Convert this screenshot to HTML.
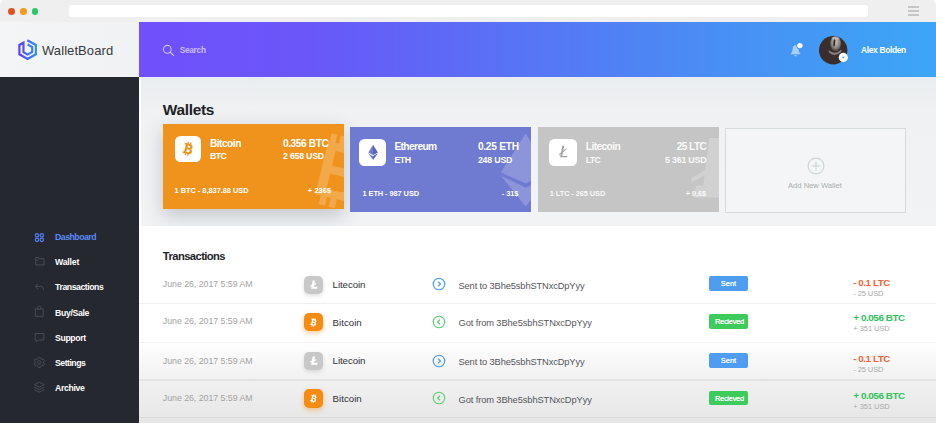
<!DOCTYPE html>
<html><head><meta charset="utf-8"><title>WalletBoard</title>
<style>
*{box-sizing:border-box;margin:0;padding:0}
html,body{width:936px;height:423px;overflow:hidden;background:#fff;font-family:"Liberation Sans",sans-serif}
.a{position:absolute}
.t{position:absolute;line-height:1;white-space:nowrap}
svg{overflow:visible}
</style></head><body>
<div class="a" style="left:0;top:0;width:936px;height:22px;background:#efefef;border-radius:5px 5px 0 0"></div>
<div class="a" style="left:8.2px;top:7.8px;width:6.8px;height:6.8px;border-radius:50%;background:#e0531d"></div>
<div class="a" style="left:19.9px;top:7.8px;width:6.8px;height:6.8px;border-radius:50%;background:#f59a1c"></div>
<div class="a" style="left:31.5px;top:7.8px;width:6.8px;height:6.8px;border-radius:50%;background:#2dc76a"></div>
<div class="a" style="left:69.2px;top:4.7px;width:798.8px;height:12.8px;background:#fff;border-radius:3px"></div>
<div class="a" style="left:908px;top:5.9px;width:10.8px;height:1.7px;background:#c6c6c6"></div>
<div class="a" style="left:908px;top:10px;width:10.8px;height:1.7px;background:#c6c6c6"></div>
<div class="a" style="left:908px;top:14.1px;width:10.8px;height:1.7px;background:#c6c6c6"></div>
<div class="a" style="left:0;top:22px;width:139px;height:55px;background:linear-gradient(90deg,#f4f5f6,#f0f2f4)"></div>
<div class="a" style="left:0;top:77px;width:139px;height:346px;background:#25282e"></div>
<div class="a" style="left:139px;top:22px;width:797px;height:54.5px;background:linear-gradient(90deg,#7050fb 0%,#6a56f9 20%,#5c6cf6 41%,#4a8cf4 70%,#3ca6f6 100%)"></div>
<div class="a" style="left:139px;top:76.5px;width:797px;height:149px;background:linear-gradient(180deg,#eaedef 0%,#eff1f3 22%,#f1f3f5 100%)"></div>
<div class="a" style="left:139px;top:76.5px;width:2.2px;height:149px;background:#fbfcfc"></div>
<svg class="a" style="left:17px;top:37.5px" width="22" height="23" viewBox="0 0 22 23">
<defs><linearGradient id="lg" gradientUnits="userSpaceOnUse" x1="2" x2="19" y1="0" y2="0"><stop offset="0" stop-color="#5b3df6"/><stop offset="1" stop-color="#2f8ff7"/></linearGradient></defs>
<path d="M10.6 6.4 L15.2 9.1 V13.9 L10.6 16.6 L6.5 14.1 V4.7 L2.4 7.0 V16.3 L10.6 20.9 L18.9 16.3 V7.0 L10.3 2.2" fill="none" stroke="url(#lg)" stroke-width="2.15" stroke-linejoin="miter"/></svg>
<div class="t" style="left:42.00px;top:44.25px;font-size:13px;color:#383a41;letter-spacing:0.079px;">WalletBoard</div>
<svg class="a" style="left:162px;top:44px" width="13" height="13" viewBox="0 0 13 13"><circle cx="5.3" cy="5.3" r="3.9" fill="none" stroke="#cbc1fd" stroke-width="1.1"/><path d="M8.2 8.2 L11.6 11.4" stroke="#cbc1fd" stroke-width="1.2" stroke-linecap="round"/></svg>
<div class="t" style="left:179.70px;top:46.10px;font-size:8.3px;color:#c9bdfc;font-weight:bold;letter-spacing:-0.281px;">Search</div>
<svg class="a" style="left:789px;top:42px" width="14" height="15" viewBox="0 0 14 15"><path d="M6.6 2.2 C4.3 2.2 3.6 4.3 3.6 6.2 C3.6 8.6 2.6 9.6 1.9 10.4 V11.2 H11.3 V10.4 C10.6 9.6 9.6 8.6 9.6 6.2 C9.6 4.3 8.9 2.2 6.6 2.2 Z M5.4 12 H7.8 C7.8 12.9 7.3 13.4 6.6 13.4 C5.9 13.4 5.4 12.9 5.4 12 Z" fill="#a9cffb" transform="translate(0 1.1)"/><circle cx="10.9" cy="3.6" r="3.6" fill="#4594f4"/><circle cx="10.9" cy="3.6" r="2.7" fill="#fff"/></svg>
<svg class="a" style="left:819px;top:35.5px" width="30" height="30" viewBox="0 0 30 30">
<defs><clipPath id="av"><circle cx="14.2" cy="14.2" r="14.2"/></clipPath><radialGradient id="fg" cx="0.5" cy="0.4" r="0.6"><stop offset="0" stop-color="#c4c1c0"/><stop offset="0.6" stop-color="#8f8a88"/><stop offset="1" stop-color="#4a403e"/></radialGradient></defs>
<g clip-path="url(#av)"><rect width="30" height="30" fill="#3a2e2c"/><ellipse cx="16.6" cy="7.6" rx="5.4" ry="7.6" fill="url(#fg)"/><ellipse cx="15.3" cy="6.8" rx="0.9" ry="3.6" fill="#2a2220" transform="rotate(6 15.3 6.8)"/><path d="M12.5 1.5 Q16 0.4 20 2 L19 4 Q16 2.6 13.5 3.6 Z" fill="#d8d6d5" opacity=".55"/><path d="M9.6 14 Q16 19.5 22.4 13.6 L22.2 16 Q16 21.6 10 16.4 Z" fill="#8d8684" opacity=".9"/></g>
<circle cx="24.3" cy="21.4" r="4.6" fill="#fff"/><path d="M22.8 20.8 H25.8 L24.3 22.5 Z" fill="#3f9af5"/></svg>
<div class="t" style="left:861.00px;top:46.05px;font-size:8.4px;color:#ffffff;font-weight:bold;letter-spacing:-0.322px;">Alex Bolden</div>
<div class="t" style="left:55.10px;top:232.90px;font-size:8.7px;color:#5b8cf6;font-weight:bold;letter-spacing:-0.494px;">Dashboard</div>
<div class="t" style="left:55.10px;top:257.90px;font-size:8.7px;color:#fff;font-weight:bold;letter-spacing:-0.216px;">Wallet</div>
<div class="t" style="left:55.10px;top:282.90px;font-size:8.7px;color:#fff;font-weight:bold;letter-spacing:-0.448px;">Transactions</div>
<div class="t" style="left:55.10px;top:308.90px;font-size:8.7px;color:#fff;font-weight:bold;letter-spacing:-0.344px;">Buy/Sale</div>
<div class="t" style="left:55.10px;top:333.90px;font-size:8.7px;color:#fff;font-weight:bold;letter-spacing:-0.378px;">Support</div>
<div class="t" style="left:55.10px;top:358.90px;font-size:8.7px;color:#fff;font-weight:bold;letter-spacing:-0.515px;">Settings</div>
<div class="t" style="left:55.10px;top:383.90px;font-size:8.7px;color:#fff;font-weight:bold;letter-spacing:-0.374px;">Archive</div>
<svg class="a" style="left:33px;top:232px" width="13" height="12" viewBox="0 0 13 12"><g fill="none" stroke="#4f7ff5" stroke-width="1.25"><circle cx="3.95" cy="3.3" r="1.7"/><circle cx="8.8" cy="3.3" r="1.7"/><circle cx="3.95" cy="7.85" r="1.7"/><circle cx="8.8" cy="7.85" r="1.7"/></g></svg>
<svg class="a" style="left:33px;top:255.3px" width="13" height="12" viewBox="0 0 13 12"><path d="M2.7 2.5 H5.6 L6.5 3.7 H11 V10 H2.7 Z M2.7 5.2 H5 L5.8 4.3" fill="none" stroke="#474b55" stroke-width="1"/></svg>
<svg class="a" style="left:33px;top:281px" width="13" height="12" viewBox="0 0 13 12"><path d="M5 2.8 L2.3 5.4 L5 8 M2.5 5.4 H7.5 C9.6 5.4 10.6 6.8 10.6 9" fill="none" stroke="#474b55" stroke-width="1"/></svg>
<svg class="a" style="left:33px;top:305px" width="13" height="13" viewBox="0 0 13 13"><path d="M2.3 4 H10.2 V11.3 H2.3 Z M4.4 4 V3 C4.4 1.8 5.2 1.2 6.25 1.2 C7.3 1.2 8.1 1.8 8.1 3 V4" fill="none" stroke="#474b55" stroke-width="1"/></svg>
<svg class="a" style="left:33px;top:331px" width="13" height="13" viewBox="0 0 13 13"><path d="M2.2 2.5 H10.8 V9 H5.2 L3.2 11 V9 H2.2 Z" fill="none" stroke="#474b55" stroke-width="1"/></svg>
<svg class="a" style="left:33px;top:356px" width="13" height="13" viewBox="0 0 13 13"><circle cx="6.3" cy="6.4" r="1.7" fill="none" stroke="#474b55" stroke-width="1"/><path d="M5.3 1.3 H7.3 L7.7 2.7 L9 3.4 L10.4 3 L11.4 4.7 L10.4 5.8 V7 L11.4 8.1 L10.4 9.8 L9 9.4 L7.7 10.1 L7.3 11.5 H5.3 L4.9 10.1 L3.6 9.4 L2.2 9.8 L1.2 8.1 L2.2 7 V5.8 L1.2 4.7 L2.2 3 L3.6 3.4 L4.9 2.7 Z" fill="none" stroke="#474b55" stroke-width="1"/></svg>
<svg class="a" style="left:33px;top:381px" width="13" height="13" viewBox="0 0 13 13"><path d="M6.3 1.2 L11.3 3.7 L6.3 6.2 L1.3 3.7 Z M1.3 6.2 L6.3 8.7 L11.3 6.2 M1.3 8.7 L6.3 11.2 L11.3 8.7" fill="none" stroke="#474b55" stroke-width="1" stroke-linejoin="round"/></svg>
<div class="t" style="left:162.80px;top:102.05px;font-size:15.4px;color:#212226;font-weight:bold;letter-spacing:-0.306px;">Wallets</div>
<div class="a" style="left:162.5px;top:124px;width:181.5px;height:85.4px;background:#f0931c;box-shadow:0 7px 18px 0 rgba(50,60,70,.24);overflow:hidden">
<svg class="a" style="left:0;top:0" width="182" height="86" viewBox="162.5 124 182 86"><g transform="translate(327.7 141.1) rotate(13.5)" fill="rgba(255,255,255,.2)"><path fill-rule="evenodd" d="M0 0 H24 C34 0 38 6 38 13.5 C38 20 35 24.5 30 26.5 C37 28.5 41 33.5 41 40 C41 49 35 54.7 25 54.7 H0 Z M9.5 8 V23 H21 C26 23 28.5 20 28.5 15.5 C28.5 11 26 8 21 8 Z M9.5 31 V46.7 H22 C28 46.7 31 43.5 31 38.8 C31 34 28 31 22 31 Z"/><rect x="1.5" y="-8.5" width="6" height="8.5"/><rect x="11" y="-8.5" width="6" height="8.5"/><rect x="5.5" y="54.7" width="6.5" height="9"/><rect x="15.5" y="54.7" width="6.5" height="9"/></g></svg>
</div>
<div class="a" style="left:174.6px;top:136.2px;width:26.5px;height:26px;background:#fff;border-radius:5.5px"></div>
<svg class="a" style="left:0;top:0" width="936" height="423" viewBox="0 0 936 423"><path transform="translate(188.1 148.85) rotate(14) scale(0.9) translate(-5 -7.5)" fill="#f0931c" fill-rule="evenodd" d="M0 1.8 H5.6 C8.2 1.8 9.4 3 9.4 4.8 C9.4 6 8.8 6.8 7.8 7.2 C9.2 7.6 10 8.6 10 10 C10 12 8.6 13.2 6 13.2 H0 V11.4 H1.4 V3.6 H0 Z M3.9 3.8 V6.3 H5.3 C6.3 6.3 6.9 5.85 6.9 5.05 C6.9 4.25 6.3 3.8 5.3 3.8 Z M3.9 8.2 V11.2 H5.7 C6.8 11.2 7.4 10.6 7.4 9.7 C7.4 8.8 6.8 8.2 5.7 8.2 Z M2.9 0 H4.4 V1.9 H2.9 Z M5.6 0 H7.1 V1.9 H5.6 Z M2.9 13.1 H4.4 V15 H2.9 Z M5.6 13.1 H7.1 V15 H5.6 Z"/></svg>
<div class="t" style="left:209.90px;top:138.65px;font-size:10.2px;color:#ffffff;font-weight:bold;letter-spacing:-0.509px;">Bitcoin</div>
<div class="t" style="left:209.90px;top:151.85px;font-size:8.8px;color:#ffffff;font-weight:bold;letter-spacing:-0.595px;">BTC</div>
<div class="t" style="left:283.00px;top:138.65px;font-size:10.2px;color:#ffffff;font-weight:bold;letter-spacing:-0.436px;">0.356 BTC</div>
<div class="t" style="left:283.00px;top:151.85px;font-size:8.8px;color:#ffffff;font-weight:bold;letter-spacing:-0.227px;">2 658 USD</div>
<div class="t" style="left:174.60px;top:187.05px;font-size:7.4px;color:#ffffff;font-weight:bold;letter-spacing:-0.022px;">1 BTC - 8,837.88 USD</div>
<div class="t" style="left:307.80px;top:187.05px;font-size:7.4px;color:#ffffff;font-weight:bold;letter-spacing:0.110px;">+ 236$</div>
<div class="a" style="left:350px;top:127.3px;width:181px;height:85.2px;background:#6f7bd0;overflow:hidden">
<svg class="a" style="left:145px;top:0" width="36" height="86" viewBox="0 0 36 86"><g fill="#8c95da"><path d="M30.7 6.6 L5.9 45.6 L30.7 56.2 L55.5 45.6 Z"/><path d="M6 48.7 L30.7 60.7 L55.5 48.7 L30.7 79.6 Z"/></g></svg>
</div>
<div class="a" style="left:359.3px;top:138.8px;width:26.6px;height:27px;background:#fff;border-radius:5.5px"></div>
<svg class="a" style="left:365.5px;top:143.8px" width="14" height="17" viewBox="0 0 14 17"><path d="M7 1 L2.3 8.4 L7 11 L11.7 8.4 Z" fill="#6f7bd0"/><path d="M2.3 9.5 L7 12.2 L11.7 9.5 L7 15.8 Z" fill="#6f7bd0"/><path d="M7 1 L7 11 L11.7 8.4 Z M7 12.2 L11.7 9.5 L7 15.8 Z" fill="#5a66c0"/></svg>
<div class="t" style="left:394.40px;top:141.65px;font-size:10.2px;color:#ffffff;font-weight:bold;letter-spacing:-0.606px;">Ethereum</div>
<div class="t" style="left:394.40px;top:155.85px;font-size:8.8px;color:#ffffff;font-weight:bold;letter-spacing:-0.400px;">ETH</div>
<div class="t" style="left:477.90px;top:141.65px;font-size:10.2px;color:#ffffff;font-weight:bold;letter-spacing:-0.261px;">0.25 ETH</div>
<div class="t" style="left:477.90px;top:155.85px;font-size:8.8px;color:#ffffff;font-weight:bold;letter-spacing:-0.187px;">248 USD</div>
<div class="t" style="left:362.50px;top:190.05px;font-size:7.4px;color:#ffffff;font-weight:bold;letter-spacing:-0.065px;">1 ETH - 987 USD</div>
<div class="t" style="left:501.70px;top:190.05px;font-size:7.4px;color:#ffffff;font-weight:bold;letter-spacing:-0.033px;">- 31$</div>
<div class="a" style="left:537.5px;top:127.3px;width:181.5px;height:85.2px;background:#c5c5c5;overflow:hidden">
<svg class="a" style="left:140px;top:0" width="42" height="86" viewBox="0 0 42 86"><g fill="#d1d1d1"><path d="M31.1 11.1 H42 V59 H25.3 Z"/><path d="M18.3 58.5 H42 V70.6 H15 Z"/><path d="M13.6 51 L29 42 L28 47.5 L13 56 Z"/></g></svg>
</div>
<div class="a" style="left:549.4px;top:138.7px;width:27.2px;height:27.2px;background:#fff;border-radius:5.5px"></div>
<svg class="a" style="left:0;top:0" width="936" height="423" viewBox="0 0 936 423"><g fill="#a2a2a2"><path d="M562.4 145.8 H564.3 L562.3 155.9 H567.5 L567.2 157.3 H560.1 Z"/><path d="M559.2 153.9 L566.7 148.1 L566.4 149.6 L558.9 155.4 Z"/></g></svg>
<div class="t" style="left:585.80px;top:141.65px;font-size:10.2px;color:#f9f9f9;font-weight:bold;letter-spacing:-0.600px;">Litecoin</div>
<div class="t" style="left:585.80px;top:155.85px;font-size:8.8px;color:#f9f9f9;font-weight:bold;letter-spacing:-0.751px;">LTC</div>
<div class="t" style="left:676.70px;top:141.65px;font-size:10.2px;color:#f9f9f9;font-weight:bold;letter-spacing:-0.592px;">25 LTC</div>
<div class="t" style="left:665.00px;top:155.85px;font-size:8.8px;color:#f9f9f9;font-weight:bold;letter-spacing:-0.183px;">5 361 USD</div>
<div class="t" style="left:549.80px;top:190.05px;font-size:7.4px;color:#f9f9f9;font-weight:bold;letter-spacing:-0.074px;">1 LTC - 265 USD</div>
<div class="t" style="left:685.70px;top:190.05px;font-size:7.4px;color:#f9f9f9;font-weight:bold;letter-spacing:-0.080px;">+ 0,6$</div>
<div class="a" style="left:725px;top:127.5px;width:180.6px;height:85px;border:1px solid #d3dbdc;background:#f3f5f6"></div>
<svg class="a" style="left:806px;top:155.6px" width="20" height="20" viewBox="0 0 20 20"><circle cx="10" cy="10" r="7.9" fill="none" stroke="#cad4d5" stroke-width="1.1"/><path d="M10 5.8 V14.2 M5.8 10 H14.2" stroke="#cad4d5" stroke-width="1.1"/></svg>
<div class="t" style="left:788.00px;top:181.95px;font-size:7.6px;color:#a9adad;letter-spacing:0.001px;">Add New Wallet</div>
<div class="a" style="left:139px;top:225.5px;width:797px;height:197.5px;background:linear-gradient(180deg,#fff 0%,#fff 58%,#f1f1f1 78%,#e6e6e6 100%)"></div>
<div class="t" style="left:162.80px;top:250.65px;font-size:11.2px;color:#222327;font-weight:bold;letter-spacing:-0.566px;">Transactions</div>
<div class="a" style="left:139px;top:303.0px;width:797px;height:1.2px;background:rgba(0,0,0,.055)"></div>
<div class="a" style="left:139px;top:341.7px;width:797px;height:1.2px;background:rgba(0,0,0,.055)"></div>
<div class="a" style="left:139px;top:379.4px;width:797px;height:1.2px;background:rgba(0,0,0,.055)"></div>
<div class="a" style="left:139px;top:417.1px;width:797px;height:1.2px;background:rgba(0,0,0,.055)"></div>
<div class="t" style="left:162.80px;top:279.85px;font-size:8.8px;color:#a3a3a3;letter-spacing:-0.034px;">June 26, 2017 5:59 AM</div>
<div class="a" style="left:304.4px;top:275.8px;width:18.2px;height:18.2px;border-radius:5px;background:#c8c8c8;box-shadow:0 2px 4px rgba(0,0,0,.12)"></div>
<svg class="a" style="left:308.5px;top:279.9px" width="10" height="10" viewBox="0 0 10 10"><g fill="#fff"><path d="M3.7 0.6 H6 L4.9 6.7 H8.6 L8.2 8.8 H2.1 Z"/><path d="M1.4 5.3 L7.2 2.9 L6.9 4.4 L1.1 6.8 Z"/></g></svg>
<div class="t" style="left:332.60px;top:279.90px;font-size:9.7px;color:#303136;letter-spacing:-0.079px;">Litecoin</div>
<svg class="a" style="left:431.5px;top:277.1px" width="14" height="14" viewBox="0 0 14 14"><circle cx="7" cy="7" r="5.75" fill="none" stroke="#4a9cf5" stroke-width="1.2"/><path d="M6.1 4.7 L8.4 7 L6.1 9.3" fill="none" stroke="#4a9cf5" stroke-width="1.25"/></svg>
<div class="t" style="left:458.50px;top:281.60px;font-size:9.3px;color:#55565a;letter-spacing:-0.124px;">Sent to 3Bhe5sbhSTNxcDpYyy</div>
<div class="a" style="left:709.2px;top:276.0px;width:39.3px;height:14.6px;border-radius:2px;background:#4f9df0"></div>
<div class="t" style="left:720.80px;top:280.05px;font-size:7.4px;color:#fff;letter-spacing:0.044px;text-shadow:0 0 .4px #fff;">Sent</div>
<div class="t" style="left:853.30px;top:277.80px;font-size:9.9px;color:#f4633a;font-weight:bold;letter-spacing:-0.486px;">- 0.1 LTC</div>
<div class="t" style="left:853.30px;top:290.00px;font-size:7.5px;color:#a9a9a9;letter-spacing:-0.093px;">- 25 USD</div>
<div class="t" style="left:162.80px;top:316.85px;font-size:8.8px;color:#a3a3a3;letter-spacing:-0.034px;">June 26, 2017 5:59 AM</div>
<div class="a" style="left:304.4px;top:313.2px;width:18.2px;height:18.2px;border-radius:5px;background:#f68b12;box-shadow:0 2px 5px rgba(246,139,18,.45)"></div>
<svg class="a" style="left:0;top:0" width="936" height="423" viewBox="0 0 936 423"><path transform="translate(313.6 322.4) rotate(14) scale(0.57) translate(-5 -7.5)" fill="#fff" fill-rule="evenodd" d="M0 1.8 H5.6 C8.2 1.8 9.4 3 9.4 4.8 C9.4 6 8.8 6.8 7.8 7.2 C9.2 7.6 10 8.6 10 10 C10 12 8.6 13.2 6 13.2 H0 V11.4 H1.4 V3.6 H0 Z M3.9 3.8 V6.3 H5.3 C6.3 6.3 6.9 5.85 6.9 5.05 C6.9 4.25 6.3 3.8 5.3 3.8 Z M3.9 8.2 V11.2 H5.7 C6.8 11.2 7.4 10.6 7.4 9.7 C7.4 8.8 6.8 8.2 5.7 8.2 Z M2.9 0 H4.4 V1.9 H2.9 Z M5.6 0 H7.1 V1.9 H5.6 Z M2.9 13.1 H4.4 V15 H2.9 Z M5.6 13.1 H7.1 V15 H5.6 Z"/></svg>
<div class="t" style="left:332.60px;top:317.90px;font-size:9.7px;color:#303136;letter-spacing:0.012px;">Bitcoin</div>
<svg class="a" style="left:431.5px;top:314.6px" width="14" height="14" viewBox="0 0 14 14"><circle cx="7" cy="7" r="5.75" fill="none" stroke="#5fd273" stroke-width="1.2"/><path d="M7.9 4.7 L5.6 7 L7.9 9.3" fill="none" stroke="#5fd273" stroke-width="1.25"/></svg>
<div class="t" style="left:458.50px;top:318.60px;font-size:9.3px;color:#55565a;letter-spacing:-0.098px;">Got from 3Bhe5sbhSTNxcDpYyy</div>
<div class="a" style="left:709.2px;top:314.4px;width:39.3px;height:14.4px;border-radius:2px;background:#3dcb5b"></div>
<div class="t" style="left:714.90px;top:318.05px;font-size:7.4px;color:#fff;letter-spacing:-0.231px;text-shadow:0 0 .4px #fff;">Recieved</div>
<div class="t" style="left:853.30px;top:312.80px;font-size:9.9px;color:#2fc25b;font-weight:bold;letter-spacing:-0.437px;">+ 0.056 BTC</div>
<div class="t" style="left:853.30px;top:325.00px;font-size:7.5px;color:#a9a9a9;letter-spacing:-0.055px;">+ 351 USD</div>
<div class="t" style="left:162.80px;top:356.85px;font-size:8.8px;color:#a3a3a3;letter-spacing:-0.034px;">June 26, 2017 5:59 AM</div>
<div class="a" style="left:304.4px;top:351.8px;width:18.2px;height:18.2px;border-radius:5px;background:#c8c8c8;box-shadow:0 2px 4px rgba(0,0,0,.12)"></div>
<svg class="a" style="left:308.5px;top:355.9px" width="10" height="10" viewBox="0 0 10 10"><g fill="#fff"><path d="M3.7 0.6 H6 L4.9 6.7 H8.6 L8.2 8.8 H2.1 Z"/><path d="M1.4 5.3 L7.2 2.9 L6.9 4.4 L1.1 6.8 Z"/></g></svg>
<div class="t" style="left:332.60px;top:355.90px;font-size:9.7px;color:#303136;letter-spacing:-0.079px;">Litecoin</div>
<svg class="a" style="left:431.5px;top:354.2px" width="14" height="14" viewBox="0 0 14 14"><circle cx="7" cy="7" r="5.75" fill="none" stroke="#4a9cf5" stroke-width="1.2"/><path d="M6.1 4.7 L8.4 7 L6.1 9.3" fill="none" stroke="#4a9cf5" stroke-width="1.25"/></svg>
<div class="t" style="left:458.50px;top:357.60px;font-size:9.3px;color:#55565a;letter-spacing:-0.124px;">Sent to 3Bhe5sbhSTNxcDpYyy</div>
<div class="a" style="left:709.2px;top:353.4px;width:39.3px;height:14.6px;border-radius:2px;background:#4f9df0"></div>
<div class="t" style="left:720.80px;top:357.05px;font-size:7.4px;color:#fff;letter-spacing:0.044px;text-shadow:0 0 .4px #fff;">Sent</div>
<div class="t" style="left:853.30px;top:353.80px;font-size:9.9px;color:#f4633a;font-weight:bold;letter-spacing:-0.486px;">- 0.1 LTC</div>
<div class="t" style="left:853.30px;top:366.00px;font-size:7.5px;color:#a9a9a9;letter-spacing:-0.093px;">- 25 USD</div>
<div class="t" style="left:162.80px;top:393.85px;font-size:8.8px;color:#a3a3a3;letter-spacing:-0.034px;">June 26, 2017 5:59 AM</div>
<div class="a" style="left:304.4px;top:389.4px;width:18.2px;height:18.2px;border-radius:5px;background:#f68b12;box-shadow:0 2px 5px rgba(246,139,18,.45)"></div>
<svg class="a" style="left:0;top:0" width="936" height="423" viewBox="0 0 936 423"><path transform="translate(313.6 398.6) rotate(14) scale(0.57) translate(-5 -7.5)" fill="#fff" fill-rule="evenodd" d="M0 1.8 H5.6 C8.2 1.8 9.4 3 9.4 4.8 C9.4 6 8.8 6.8 7.8 7.2 C9.2 7.6 10 8.6 10 10 C10 12 8.6 13.2 6 13.2 H0 V11.4 H1.4 V3.6 H0 Z M3.9 3.8 V6.3 H5.3 C6.3 6.3 6.9 5.85 6.9 5.05 C6.9 4.25 6.3 3.8 5.3 3.8 Z M3.9 8.2 V11.2 H5.7 C6.8 11.2 7.4 10.6 7.4 9.7 C7.4 8.8 6.8 8.2 5.7 8.2 Z M2.9 0 H4.4 V1.9 H2.9 Z M5.6 0 H7.1 V1.9 H5.6 Z M2.9 13.1 H4.4 V15 H2.9 Z M5.6 13.1 H7.1 V15 H5.6 Z"/></svg>
<div class="t" style="left:332.60px;top:393.90px;font-size:9.7px;color:#303136;letter-spacing:0.012px;">Bitcoin</div>
<svg class="a" style="left:431.5px;top:391.0px" width="14" height="14" viewBox="0 0 14 14"><circle cx="7" cy="7" r="5.75" fill="none" stroke="#5fd273" stroke-width="1.2"/><path d="M7.9 4.7 L5.6 7 L7.9 9.3" fill="none" stroke="#5fd273" stroke-width="1.25"/></svg>
<div class="t" style="left:458.50px;top:395.60px;font-size:9.3px;color:#55565a;letter-spacing:-0.098px;">Got from 3Bhe5sbhSTNxcDpYyy</div>
<div class="a" style="left:709.2px;top:390.9px;width:39.3px;height:14.4px;border-radius:2px;background:#3dcb5b"></div>
<div class="t" style="left:714.90px;top:395.05px;font-size:7.4px;color:#fff;letter-spacing:-0.231px;text-shadow:0 0 .4px #fff;">Recieved</div>
<div class="t" style="left:853.30px;top:390.80px;font-size:9.9px;color:#2fc25b;font-weight:bold;letter-spacing:-0.437px;">+ 0.056 BTC</div>
<div class="t" style="left:853.30px;top:403.00px;font-size:7.5px;color:#a9a9a9;letter-spacing:-0.055px;">+ 351 USD</div>
</body></html>
